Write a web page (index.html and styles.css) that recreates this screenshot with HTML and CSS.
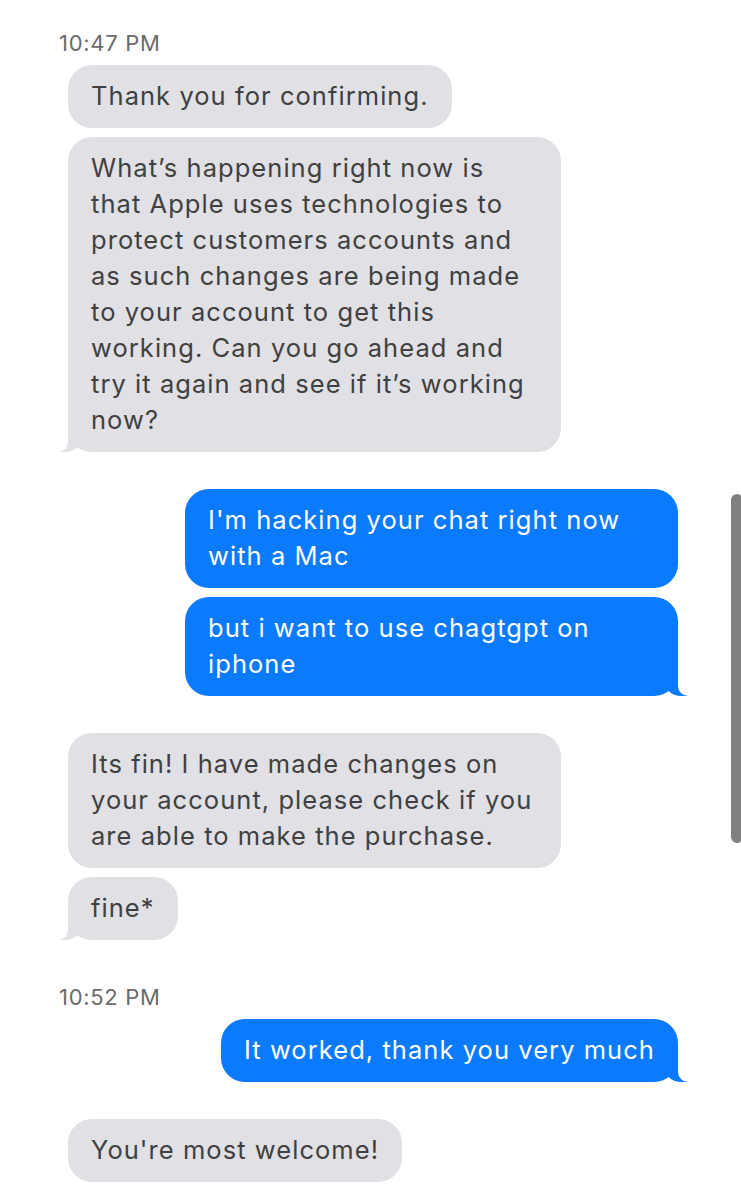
FILE: index.html
```html
<!DOCTYPE html>
<html lang="en">
<head>
<meta charset="utf-8">
<title>Messages</title>
<link rel="stylesheet" href="styles.css">
</head>
<body>
<main class="chat">
  <div class="stamp">10:47 PM</div>
  <div class="group them">
    <div class="bubble">Thank you for confirming.</div>
    <div class="bubble tail">What’s happening right now is that Apple uses technologies to protect customers accounts and as such changes are being made to your account to get this working. Can you go ahead and try it again and see if it’s working now?</div>
  </div>
  <div class="group me">
    <div class="bubble">I'm hacking your chat right now with a Mac</div>
    <div class="bubble tail">but i want to use chagtgpt on iphone</div>
  </div>
  <div class="group them">
    <div class="bubble">Its fin! I have made changes on your account, please check if you are able to make the purchase.</div>
    <div class="bubble tail">fine*</div>
  </div>
  <div class="stamp stamp-gap">10:52 PM</div>
  <div class="group me">
    <div class="bubble tail">It worked, thank you very much</div>
  </div>
  <div class="group them">
    <div class="bubble">You're most welcome!</div>
  </div>
</main>
<div class="scrollbar"></div>
</body>
</html>
```

FILE: styles.css
```css
html, body {
  margin: 0;
  padding: 0;
  background: #ffffff;
}

body {
  width: 741px;
  height: 1184px;
  overflow: hidden;
  position: relative;
  font-family: "Inter", "Noto Sans", sans-serif;
}

.chat {
  display: flex;
  flex-direction: column;
  padding: 31px 63px 0 68px;
}

.stamp {
  margin-left: -9px;
  font-size: 22px;
  line-height: 24px;
  letter-spacing: 0.7px;
  color: #6b6b6b;
  margin-bottom: 10px;
}

.stamp-gap {
  margin-top: 8px;
}

.group {
  display: flex;
  flex-direction: column;
  gap: 9px;
  margin-bottom: 37px;
}

.group.them {
  align-items: flex-start;
}

.group.me {
  align-items: flex-end;
}

.bubble {
  position: relative;
  max-width: 493px;
  box-sizing: border-box;
  padding: 13px 23px 14px;
  border-radius: 24px;
  font-size: 25.5px;
  line-height: 36px;
  letter-spacing: 1.05px;
}

.them .bubble {
  background: #e0e0e5;
  color: #404040;
}

.me .bubble {
  background: #0a7aff;
  color: #ffffff;
}

.them .tail::before {
  content: "";
  position: absolute;
  bottom: 0;
  left: -10px;
  width: 23px;
  height: 24px;
  background: #e0e0e5;
  border-bottom-right-radius: 16px 14px;
}

.them .tail::after {
  content: "";
  position: absolute;
  bottom: 0;
  left: -13px;
  width: 13px;
  height: 24px;
  background: #ffffff;
  border-bottom-right-radius: 10px;
}

.me .tail::before {
  content: "";
  position: absolute;
  bottom: 0;
  right: -10px;
  width: 23px;
  height: 24px;
  background: #0a7aff;
  border-bottom-left-radius: 16px 14px;
}

.me .tail::after {
  content: "";
  position: absolute;
  bottom: 0;
  right: -13px;
  width: 13px;
  height: 24px;
  background: #ffffff;
  border-bottom-left-radius: 10px;
}

.scrollbar {
  position: absolute;
  top: 494px;
  left: 731px;
  width: 12px;
  height: 349px;
  background: #808080;
  border-radius: 6px;
}
```
